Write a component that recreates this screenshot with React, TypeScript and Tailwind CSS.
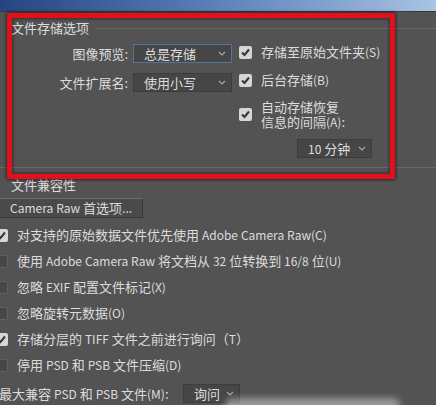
import React from 'react';

// Latin runs render a touch narrower than the CJK glyphs in the original
const T = ({ s }: { s: string }) => (
  <>
    {s.split(/([A-Za-z0-9()\/.]+)/).map((part, i) =>
      /^[A-Za-z0-9()\/.]+$/.test(part) ? (
        <span key={i} className="text-[12px]">
          {part}
        </span>
      ) : (
        <React.Fragment key={i}>{part}</React.Fragment>
      )
    )}
  </>
);

const Chevron = () => (
  <svg width="8" height="5" viewBox="0 0 8 5" className="flex-shrink-0">
    <path d="M1 1 L4 4 L7 1" fill="none" stroke="#a8a8a8" strokeWidth="1.2" />
  </svg>
);

const Check = ({ on }: { on: boolean }) =>
  on ? (
    <div className="w-[13px] h-[13px] flex-shrink-0 rounded-[2px] bg-[#d6d6d6] flex items-center justify-center">
      <svg width="11" height="11" viewBox="0 0 11 11">
        <path d="M2 5.5 L4.5 8 L9 2.5" fill="none" stroke="#353535" strokeWidth="2" />
      </svg>
    </div>
  ) : (
    <div className="w-[13px] h-[13px] flex-shrink-0 rounded-[2px] bg-[#474747] border border-[#606060]" />
  );

const Select = ({ text, w, focus }: { text: string; w: string; focus?: boolean }) => (
  <div
    className={`${w} h-[19px] flex items-center justify-between pl-[10px] pr-[5px] bg-[#464646] border ${
      focus ? 'border-[#56739c]' : 'border-[#3c3c3c]'
    }`}
  >
    <span>
      <T s={text} />
    </span>
    <Chevron />
  </div>
);

const lowerRows = [
  { on: true, label: '对支持的原始数据文件优先使用 Adobe Camera Raw(C)' },
  { on: false, label: '使用 Adobe Camera Raw 将文档从 32 位转换到 16/8 位(U)' },
  { on: false, label: '忽略 EXIF 配置文件标记(X)' },
  { on: false, label: '忽略旋转元数据(O)' },
  { on: true, label: '存储分层的 TIFF 文件之前进行询问（T）' },
  { on: false, label: '停用 PSD 和 PSB 文件压缩(D)' },
];

export default function App() {
  return (
    <div
      className="relative w-[436px] h-[405px] overflow-hidden bg-[#535353] text-[#dcdcdc] text-[13px] leading-[14px] whitespace-nowrap"
      style={{ fontFamily: '"Noto Sans CJK SC", "Noto Sans", sans-serif' }}
    >
      {/* window title strip */}
      <div className="h-[12px] bg-gradient-to-r from-[#264482] via-[#5c82ba] to-[#a9c3e3] border-b border-[#3a3a3a]" />

      {/* 文件存储选项 */}
      <div className="mt-[9px] flex items-center pl-[11px]">
        <span>文件存储选项</span>
        <div className="flex-1 h-px bg-[#676767] ml-[6px]" />
      </div>

      <div className="flex pt-[9px] pb-[9px]">
        <div className="w-[232px] flex flex-col gap-[10px]">
          <div className="flex items-center">
            <span className="w-[128px] text-right">图像预览:</span>
            <div className="ml-[5px]">
              <Select text="总是存储" w="w-[99px]" focus />
            </div>
          </div>
          <div className="flex items-center">
            <span className="w-[128px] text-right">文件扩展名:</span>
            <div className="ml-[5px]">
              <Select text="使用小写" w="w-[99px]" />
            </div>
          </div>
        </div>

        <div className="ml-[7px] flex flex-col">
          <div className="h-[16px] flex items-center gap-[9px]">
            <Check on />
            <span>
              <T s="存储至原始文件夹(S)" />
            </span>
          </div>
          <div className="mt-[12px] h-[16px] flex items-center gap-[9px]">
            <Check on />
            <span>
              <T s="后台存储(B)" />
            </span>
          </div>
          <div className="mt-[11px] flex items-center gap-[9px]">
            <Check on />
            <span className="leading-[15px]">
              自动存储恢复
              <br />
              <T s="信息的间隔(A):" />
            </span>
          </div>
          <div className="mt-[10px] ml-[58px]">
            <Select text="10 分钟" w="w-[75px]" />
          </div>
        </div>
      </div>
      <div className="h-px bg-[#676767]" />

      {/* 文件兼容性 */}
      <div className="mt-[10px] pl-[11px]">文件兼容性</div>

      <div className="mt-[6px] -ml-[2px] w-[145px] h-[20px] flex items-center pl-[12px] bg-[#4a4a4a] border-t border-[#6c6c6c] border-r border-b border-r-[#3a3a3a] border-b-[#3a3a3a]">
        <span>
          <T s="Camera Raw 首选项..." />
        </span>
      </div>

      <div className="mt-[4px] flex flex-col">
        {lowerRows.map((r) => (
          <div key={r.label} className="h-[26px] flex items-center gap-[9px] -ml-[5px]">
            <Check on={r.on} />
            <span>
              <T s={r.label} />
            </span>
          </div>
        ))}
      </div>

      <div className="mt-[6px] flex items-center -ml-[1px]">
        <span className="w-[184px]">
          <T s="最大兼容 PSD 和 PSB 文件(M):" />
        </span>
        <Select text="询问" w="w-[57px]" />
      </div>

      {/* red annotation box */}
      <div className="absolute left-[7px] top-[13px] w-[388px] h-[166px] border-[5px] border-[#e3101b] rounded-[2px] shadow-[0_0_3px_1px_rgba(0,0,0,0.55),inset_0_0_3px_1px_rgba(0,0,0,0.45)]" />

      {/* blurred watermark at bottom */}
      <div className="absolute left-[225px] top-[398px] w-[175px] h-[14px] rounded-full bg-white/40 blur-[3px]" />
    </div>
  );
}
